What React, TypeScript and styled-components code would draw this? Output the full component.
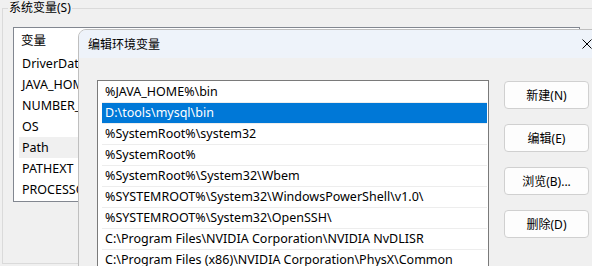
import React from "react";
import styled, { createGlobalStyle } from "styled-components";

const GlobalStyle = createGlobalStyle`
  html, body {
    margin: 0;
    padding: 0;
  }
  body {
    background: #f0f0f0;
    font-family: "Noto Sans", "Noto Sans CJK SC", sans-serif;
    font-size: 12.5px;
    color: #000;
    overflow: hidden;
  }
`;

const Screen = styled.div`
  position: relative;
  width: 592px;
  height: 266px;
  overflow: hidden;
`;

const GroupBox = styled.fieldset`
  box-sizing: border-box;
  margin: 0 0 0 2px;
  padding: 11px 0 0 10px;
  width: 640px;
  height: 264px;
  border: 1px solid #dadada;
  min-width: 0;
`;

const GroupLabel = styled.legend`
  margin-left: -5px;
  padding: 0 1px;
  font-size: 12px;
  line-height: 16px;
`;

const VarList = styled.div`
  box-sizing: border-box;
  width: 567px;
  height: 175px;
  border: 1px solid #828790;
  background: #fff;
  overflow: hidden;
`;

const ListHeader = styled.div`
  height: 25px;
  line-height: 25px;
  padding-left: 7px;
`;

const VarRow = styled.div<{ $hover?: boolean }>`
  height: 21px;
  line-height: 21px;
  margin-left: 5px;
  padding-left: 3px;
  white-space: nowrap;
  background: ${(p) => (p.$hover ? "#f0f0f0" : "transparent")};
`;

const Dialog = styled.div`
  position: absolute;
  left: 78px;
  top: 29px;
  box-sizing: border-box;
  width: 530px;
  height: 260px;
  background: #f0f0f0;
  border: 1px solid #bfbfbf;
  border-radius: 8px 8px 0 0;
  overflow: hidden;
`;

const TitleBar = styled.div`
  display: flex;
  align-items: center;
  justify-content: space-between;
  height: 28px;
  padding-left: 9px;
  font-size: 12px;
  background: #eef3fa;
`;

const CloseButton = styled.div`
  display: flex;
  align-items: center;
  justify-content: center;
  width: 40px;
  height: 28px;
`;

const Body = styled.div`
  display: flex;
  gap: 15px;
  padding: 22px 0 0 18px;
`;

const PathList = styled.div`
  box-sizing: border-box;
  width: 392px;
  height: 200px;
  padding-top: 1px;
  border: 1px solid #7a7a7a;
  background: #fff;
`;

const PathRow = styled.div<{ $selected?: boolean }>`
  height: 20px;
  line-height: 20px;
  margin: 0 1px 0 4px;
  padding-left: 3px;
  white-space: nowrap;
  border-bottom: 1px solid #ededed;
  background: ${(p) => (p.$selected ? "#0078d7" : "transparent")};
  color: ${(p) => (p.$selected ? "#fff" : "#000")};
`;

const ButtonColumn = styled.div`
  display: flex;
  flex-direction: column;
  gap: 15px;
  padding-top: 1px;
`;

const Button = styled.button`
  box-sizing: border-box;
  width: 85px;
  height: 28px;
  padding: 0;
  font: inherit;
  font-size: 12px;
  color: #000;
  background: #fdfdfd;
  border: 1px solid #d0d0d0;
  border-radius: 4px;
`;

const vars = [
  "DriverData",
  "JAVA_HOME",
  "NUMBER_OF_PROCESSORS",
  "OS",
  "Path",
  "PATHEXT",
  "PROCESSOR_ARCHITECTURE",
];

const paths = [
  "%JAVA_HOME%\\bin",
  "D:\\tools\\mysql\\bin",
  "%SystemRoot%\\system32",
  "%SystemRoot%",
  "%SystemRoot%\\System32\\Wbem",
  "%SYSTEMROOT%\\System32\\WindowsPowerShell\\v1.0\\",
  "%SYSTEMROOT%\\System32\\OpenSSH\\",
  "C:\\Program Files\\NVIDIA Corporation\\NVIDIA NvDLISR",
  "C:\\Program Files (x86)\\NVIDIA Corporation\\PhysX\\Common",
];

const buttons = ["新建(N)", "编辑(E)", "浏览(B)...", "删除(D)"];

export default function App() {
  return (
    <>
      <GlobalStyle />
      <Screen>
        <GroupBox>
          <GroupLabel>系统变量(S)</GroupLabel>
          <VarList>
            <ListHeader>变量</ListHeader>
            {vars.map((v) => (
              <VarRow key={v} $hover={v === "Path"}>
                {v}
              </VarRow>
            ))}
          </VarList>
        </GroupBox>

        <Dialog>
          <TitleBar>
            <span>编辑环境变量</span>
            <CloseButton>
              <svg width="10" height="10" viewBox="0 0 10 10">
                <path d="M0.5 0.5L9.5 9.5M9.5 0.5L0.5 9.5" stroke="#000" strokeWidth="1" />
              </svg>
            </CloseButton>
          </TitleBar>
          <Body>
            <PathList>
              {paths.map((p, i) => (
                <PathRow key={p} $selected={i === 1}>
                  {p}
                </PathRow>
              ))}
            </PathList>
            <ButtonColumn>
              {buttons.map((b) => (
                <Button key={b} type="button">
                  {b}
                </Button>
              ))}
            </ButtonColumn>
          </Body>
        </Dialog>
      </Screen>
    </>
  );
}
